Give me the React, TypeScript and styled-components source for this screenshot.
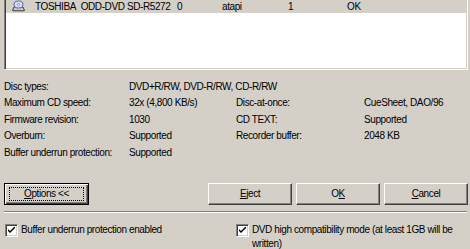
import React from "react";
import styled, { createGlobalStyle } from "styled-components";

const Global = createGlobalStyle`
  html, body { margin: 0; padding: 0; background: #d4d0c8; }
  body {
    font-family: "Liberation Sans", Arial, sans-serif;
    font-size: 10px;
    color: #000;
  }
`;

const Window = styled.div`
  width: 470px;
  height: 249px;
  box-sizing: border-box;
  padding: 0 2px 0 4px;
  overflow: hidden;
  display: flex;
  flex-direction: column;
  letter-spacing: -0.4px;
`;

const ListBox = styled.div`
  height: 70px;
  flex: none;
  box-sizing: border-box;
  background: #fff;
  border-left: 1px solid #808080;
  border-right: 1px solid #fff;
  border-bottom: 1px solid #fff;
  box-shadow: inset 1px 0 0 #404040, inset -1px 0 0 #d4d0c8, inset 0 -1px 0 #d4d0c8;
  padding: 0 1px 1px 1px;
`;

const Row = styled.div`
  display: grid;
  grid-template-columns: 29px 142px 45px 66px 59px 1fr;
  height: 13px;
  line-height: 13px;
  align-items: center;
  background: #d4d0c8;
  white-space: nowrap;
`;

const IconCell = styled.div`
  display: flex;
  align-items: flex-start;
  height: 13px;
  padding-left: 6px;
`;

const InfoGrid = styled.div`
  margin-top: 8px;
  display: grid;
  grid-template-columns: 125px 107px 128px 1fr;
  grid-auto-rows: 16.5px;
  align-items: center;
  white-space: nowrap;
`;

const Wide = styled.div`
  grid-column: 2 / span 3;
`;

const Full = styled.div`
  grid-column: 1 / span 2;
  display: grid;
  grid-template-columns: 125px 1fr;
`;

const ButtonRow = styled.div`
  margin-top: 22px;
  display: flex;
  justify-content: space-between;
  height: 22px;
`;

const RightGroup = styled.div`
  display: flex;
  gap: 4px;
`;

const Button = styled.button<{ $w: number; $default?: boolean }>`
  width: ${(p) => p.$w}px;
  height: 22px;
  box-sizing: border-box;
  margin: 0;
  padding: 0;
  font: inherit;
  letter-spacing: inherit;
  color: #000;
  background: #d4d0c8;
  position: relative;
  border: 1px solid;
  border-color: ${(p) => (p.$default ? "#000" : "#fff #404040 #404040 #fff")};
  box-shadow: ${(p) =>
    p.$default
      ? "inset 1px 1px 0 #fff, inset -1px -1px 0 #404040, inset -2px -2px 0 #808080"
      : "inset -1px -1px 0 #808080, inset 1px 1px 0 #d4d0c8"};
  display: flex;
  align-items: center;
  justify-content: center;
`;

const FocusRect = styled.span`
  position: absolute;
  inset: 3px 4px 3px 4px;
  border: 1px dotted #000;
  pointer-events: none;
`;

const Separator = styled.div`
  margin-top: 6px;
  height: 0;
  border-top: 1px solid #808080;
  border-bottom: 1px solid #fff;
  margin-right: 1px;
`;

const CheckRow = styled.div`
  margin-top: 10px;
  display: grid;
  grid-template-columns: 231px 1fr;
`;

const CheckItem = styled.label`
  display: flex;
  align-items: flex-start;
  gap: 3px;
  line-height: 14px;
`;

const Box = styled.span`
  flex: none;
  width: 13px;
  height: 13px;
  box-sizing: border-box;
  margin-left: 1px;
  margin-top: 1px;
  background: #fff;
  border: 1px solid;
  border-color: #808080 #fff #fff #808080;
  box-shadow: inset 1px 1px 0 #404040, inset -1px -1px 0 #d4d0c8;
  display: flex;
  align-items: center;
  justify-content: center;
`;

const DriveIcon = () => (
  <svg width="13" height="12" viewBox="0 0 13 12">
    <path d="M2 7 L11 7 L12.5 10.5 L0.5 10.5 Z" fill="#c8c8c8" stroke="#404040" strokeWidth="1" />
    <path d="M1 10.5 L12 10.5 L12 11.5 L1 11.5 Z" fill="#808080" />
    <ellipse cx="6.5" cy="4.5" rx="4.5" ry="3.5" fill="#d8dcf4" stroke="#5060a8" strokeWidth="1" />
    <ellipse cx="6.5" cy="4.5" rx="1.2" ry="0.9" fill="#fff" stroke="#5060a8" strokeWidth="0.6" />
  </svg>
);

const Check = () => (
  <svg width="7" height="7" viewBox="0 0 7 7">
    <path d="M0 2 L0 4 L2 6 L7 1 L7 -1 L2 4 Z" fill="#000" />
  </svg>
);

export default function App() {
  return (
    <>
      <Global />
      <Window>
        <ListBox>
          <Row>
            <IconCell>
              <DriveIcon />
            </IconCell>
            <span>TOSHIBA&nbsp; ODD-DVD SD-R5272</span>
            <span>0</span>
            <span>atapi</span>
            <span>1</span>
            <span>OK</span>
          </Row>
        </ListBox>
        <InfoGrid>
          <span>Disc types:</span>
          <Wide>DVD+R/RW, DVD-R/RW, CD-R/RW</Wide>
          <span>Maximum CD speed:</span>
          <span>32x (4,800 KB/s)</span>
          <span>Disc-at-once:</span>
          <span>CueSheet, DAO/96</span>
          <span>Firmware revision:</span>
          <span>1030</span>
          <span>CD TEXT:</span>
          <span>Supported</span>
          <span>Overburn:</span>
          <span>Supported</span>
          <span>Recorder buffer:</span>
          <span>2048 KB</span>
          <Full>
            <span>Buffer underrun protection:</span>
            <span>Supported</span>
          </Full>
        </InfoGrid>
        <ButtonRow>
          <Button $w={85} $default>
            <FocusRect />
            <span>
              <u>O</u>ptions &lt;&lt;
            </span>
          </Button>
          <RightGroup>
            <Button $w={84}>
              <span>
                <u>E</u>ject
              </span>
            </Button>
            <Button $w={84}>
              <span>
                O<u>K</u>
              </span>
            </Button>
            <Button $w={84}>
              <span>
                <u>C</u>ancel
              </span>
            </Button>
          </RightGroup>
        </ButtonRow>
        <Separator />
        <CheckRow>
          <CheckItem>
            <Box>
              <Check />
            </Box>
            <span>Buffer underrun protection enabled</span>
          </CheckItem>
          <CheckItem>
            <Box>
              <Check />
            </Box>
            <span>
              DVD high compatibility mode (at least 1GB will be
              <br />
              written)
            </span>
          </CheckItem>
        </CheckRow>
      </Window>
    </>
  );
}
